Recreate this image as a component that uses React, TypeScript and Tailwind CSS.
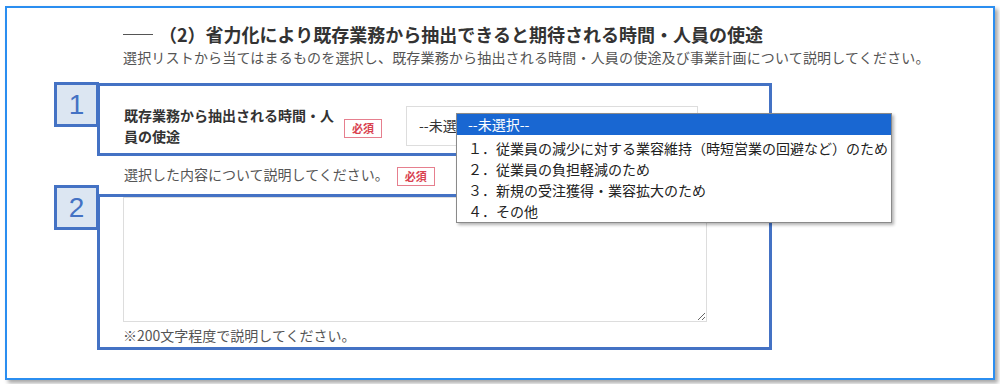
import React from 'react';

const OPTIONS = [
  '１．従業員の減少に対する業容維持（時短営業の回避など）のため',
  '２．従業員の負担軽減のため',
  '３．新規の受注獲得・業容拡大のため',
  '４．その他',
];

function Required() {
  return (
    <span className="inline-flex h-[19px] w-[38px] items-center justify-center border border-[#e67f8e] text-[11px] font-bold text-[#d9424f] leading-none">
      必須
    </span>
  );
}

function NumberTag({ n, className }: { n: string; className: string }) {
  return (
    <div
      className={`absolute left-[47px] flex h-[45px] w-[45px] items-center justify-center border-[3px] border-[#4472c4] bg-[#dce6f2] text-[28px] leading-none text-[#4472c4] ${className}`}
      style={{ fontFamily: '"Liberation Sans", Arial, sans-serif' }}
    >
      {n}
    </div>
  );
}

export default function App() {
  return (
    <div
      className="h-[384px] w-[1000px] bg-white pl-[5px] pt-[6px]"
      style={{ fontFamily: '"Noto Sans CJK JP", "Noto Sans", sans-serif' }}
    >
      <div className="relative h-[374px] w-[990px] border-2 border-[#2b8ef0] bg-white shadow-[3px_3px_4px_rgba(0,0,0,0.35)]">
        {/* heading */}
        <div className="mt-[14px] flex items-center pl-[116px]">
          <div className="h-px w-[30px] bg-[#555]" />
          <h2 className="ml-[6px] text-[18px] font-bold leading-[24px] text-[#333]">
            （2）省力化により既存業務から抽出できると期待される時間・人員の使途
          </h2>
        </div>
        <p className="mt-px pl-[116px] text-[14px] leading-[20px] tracking-[0.18px] text-[#555]">
          選択リストから当てはまるものを選択し、既存業務から抽出される時間・人員の使途及び事業計画について説明してください。
        </p>

        {/* block 1 */}
        <div className="ml-[90px] mt-[16px] flex h-[73px] w-[675px] items-center border-[3px] border-[#4472c4] pl-[24px] pt-[12px]">
          <div className="w-[212px] text-[14px] font-bold leading-[21px] text-[#333]">
            既存業務から抽出される時間・人員の使途
          </div>
          <div className="ml-[8px]">
            <Required />
          </div>
          <div className="ml-[24px] flex h-[40px] w-[292px] items-center border border-[#dddddd] bg-white pl-[12px] text-[14px] text-[#333]">
            --未選択--
          </div>
        </div>

        {/* explanation label */}
        <div className="ml-[117px] mt-[8px] flex h-[20px] items-center">
          <span className="text-[14px] leading-[20px] text-[#555]">選択した内容について説明してください。</span>
          <span className="ml-[8px]">
            <Required />
          </span>
        </div>

        {/* block 2 */}
        <div className="ml-[90px] mt-[10px] flex h-[156px] w-[675px] flex-col border-[3px] border-[#4472c4] pl-[23px]">
          <textarea className="h-[125px] w-[584px] resize border border-[#dddddd] bg-white outline-none" />
          <p className="mt-[3px] text-[14px] leading-[20px] text-[#555]">※200文字程度で説明してください。</p>
        </div>

        <NumberTag n="1" className="top-[74px]" />
        <NumberTag n="2" className="top-[177px]" />

        {/* open select list */}
        <div className="absolute left-[449px] top-[105px] w-[436px] border border-[#8a8a8a] bg-white shadow-[2px_2px_3px_rgba(0,0,0,0.3)]">
          <div className="flex h-[21px] items-center bg-[#1967d2] pl-[11px] text-[14px] text-white">--未選択--</div>
          <div className="pt-[3px]">
            {OPTIONS.map((o) => (
              <div key={o} className="flex h-[21px] items-center pl-[11px] text-[14px] text-[#222]">
                {o}
              </div>
            ))}
          </div>
        </div>
      </div>
    </div>
  );
}
